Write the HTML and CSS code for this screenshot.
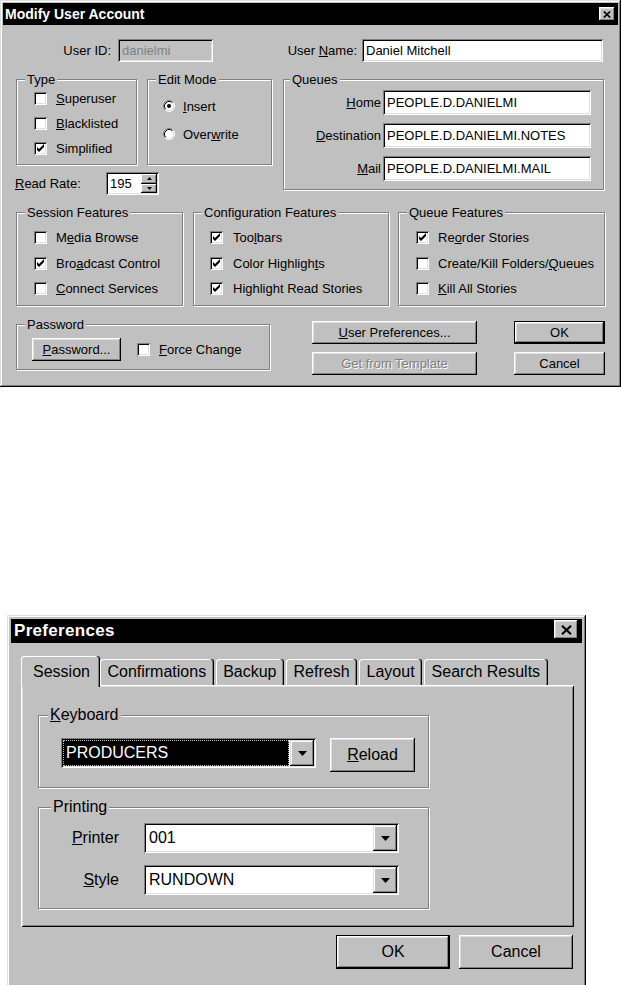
FILE: index.html
```html
<!DOCTYPE html>
<html lang="en">
<head>
    <meta charset="UTF-8">
    <title>Modify User Account</title>
    <link rel="stylesheet" href="styles.css">
</head>
<body>
    <!-- Modify User Account -->
    <div class="win acct">
        <div class="titlebar">
            <span class="title">Modify User Account</span>
            <span class="close-btn">
                <svg width="8" height="7" viewBox="0 0 8 7"><path d="M0.8 0.5L7.2 6.5M7.2 0.5L0.8 6.5" stroke="#000" stroke-width="1.7"/></svg>
            </span>
        </div>

        <div class="acct-body">
            <div class="row-ids">
                <span class="lbl lbl-userid">User ID:</span>
                <div class="field field-disabled w-userid">danielmi</div>
                <span class="lbl lbl-username">User <u>N</u>ame:</span>
                <div class="field w-username">Daniel Mitchell</div>
            </div>

            <div class="row-mid">
                <div class="col-left">
                    <div class="pair">
                        <div class="group g-type">
                            <span class="group-title">Type</span>
                            <div class="opt"><span class="check"></span><span><u>S</u>uperuser</span></div>
                            <div class="opt"><span class="check"></span><span><u>B</u>lacklisted</span></div>
                            <div class="opt"><span class="check checked"><svg width="9" height="9" viewBox="0 0 9 9"><path d="M1 3v3l2 2 5-5V0L3 5z" fill="#000"/></svg></span><span>Simplified</span></div>
                        </div>
                        <div class="group g-mode">
                            <span class="group-title">Edit Mode</span>
                            <div class="opt opt-radio">
                                <svg class="radio" width="12" height="12" viewBox="0 0 12 12">
                                    <circle cx="6" cy="6" r="5" fill="#fff"/>
                                    <path d="M2.11 9.89A5.5 5.5 0 0 1 9.89 2.11" fill="none" stroke="#808080"/>
                                    <path d="M9.89 2.11A5.5 5.5 0 0 1 2.11 9.89" fill="none" stroke="#fff"/>
                                    <path d="M2.82 9.18A4.5 4.5 0 0 1 9.18 2.82" fill="none" stroke="#000"/>
                                    <path d="M9.18 2.82A4.5 4.5 0 0 1 2.82 9.18" fill="none" stroke="#dfdfdf"/>
                                    <circle cx="6" cy="6" r="2" fill="#000"/>
                                </svg>
                                <span><u>I</u>nsert</span>
                            </div>
                            <div class="opt opt-radio">
                                <svg class="radio" width="12" height="12" viewBox="0 0 12 12">
                                    <circle cx="6" cy="6" r="5" fill="#fff"/>
                                    <path d="M2.11 9.89A5.5 5.5 0 0 1 9.89 2.11" fill="none" stroke="#808080"/>
                                    <path d="M9.89 2.11A5.5 5.5 0 0 1 2.11 9.89" fill="none" stroke="#fff"/>
                                    <path d="M2.82 9.18A4.5 4.5 0 0 1 9.18 2.82" fill="none" stroke="#000"/>
                                    <path d="M9.18 2.82A4.5 4.5 0 0 1 2.82 9.18" fill="none" stroke="#dfdfdf"/>
                                </svg>
                                <span>Over<u>w</u>rite</span>
                            </div>
                        </div>
                    </div>
                    <div class="readrate">
                        <span class="lbl-rate"><u>R</u>ead Rate:</span>
                        <div class="spin">
                            <span class="spin-val">195</span>
                            <span class="spin-btns">
                                <span class="spin-btn"><svg width="5" height="3" viewBox="0 0 5 3"><path d="M0 3h5L2.5 0z" fill="#000"/></svg></span>
                                <span class="spin-btn"><svg width="5" height="3" viewBox="0 0 5 3"><path d="M0 0h5L2.5 3z" fill="#000"/></svg></span>
                            </span>
                        </div>
                    </div>
                </div>

                <div class="group g-queues">
                    <span class="group-title">Queues</span>
                    <div class="q-row"><span><u>H</u>ome</span><div class="field w-queue">PEOPLE.D.DANIELMI</div></div>
                    <div class="q-row"><span><u>D</u>estination</span><div class="field w-queue">PEOPLE.D.DANIELMI.NOTES</div></div>
                    <div class="q-row"><span><u>M</u>ail</span><div class="field w-queue">PEOPLE.D.DANIELMI.MAIL</div></div>
                </div>
            </div>

            <div class="row-features">
                <div class="group g-feat g-session">
                    <span class="group-title">Session Features</span>
                    <div class="opt opt-feat"><span class="check"></span><span>M<u>e</u>dia Browse</span></div>
                    <div class="opt opt-feat"><span class="check checked"><svg width="9" height="9" viewBox="0 0 9 9"><path d="M1 3v3l2 2 5-5V0L3 5z" fill="#000"/></svg></span><span>Bro<u>a</u>dcast Control</span></div>
                    <div class="opt opt-feat"><span class="check"></span><span><u>C</u>onnect Services</span></div>
                </div>
                <div class="group g-feat g-config">
                    <span class="group-title">Configuration Features</span>
                    <div class="opt opt-feat"><span class="check checked"><svg width="9" height="9" viewBox="0 0 9 9"><path d="M1 3v3l2 2 5-5V0L3 5z" fill="#000"/></svg></span><span>Too<u>l</u>bars</span></div>
                    <div class="opt opt-feat"><span class="check checked"><svg width="9" height="9" viewBox="0 0 9 9"><path d="M1 3v3l2 2 5-5V0L3 5z" fill="#000"/></svg></span><span>Color Highligh<u>t</u>s</span></div>
                    <div class="opt opt-feat"><span class="check checked"><svg width="9" height="9" viewBox="0 0 9 9"><path d="M1 3v3l2 2 5-5V0L3 5z" fill="#000"/></svg></span><span>Highlight Read Stories</span></div>
                </div>
                <div class="group g-feat g-qfeat">
                    <span class="group-title">Queue Features</span>
                    <div class="opt opt-feat"><span class="check checked"><svg width="9" height="9" viewBox="0 0 9 9"><path d="M1 3v3l2 2 5-5V0L3 5z" fill="#000"/></svg></span><span>Re<u>o</u>rder Stories</span></div>
                    <div class="opt opt-feat"><span class="check"></span><span>Create/Kill Folders/<u>Q</u>ueues</span></div>
                    <div class="opt opt-feat"><span class="check"></span><span><u>K</u>ill All Stories</span></div>
                </div>
            </div>

            <div class="row-bottom">
                <div class="group g-pass">
                    <span class="group-title">Password</span>
                    <div class="pass-row">
                        <div class="btn btn-pass"><span><u>P</u>assword...</span></div>
                        <div class="opt opt-force"><span class="check"></span><span><u>F</u>orce Change</span></div>
                    </div>
                </div>
                <div class="btn-col btn-col-mid">
                    <div class="btn"><span><u>U</u>ser Preferences...</span></div>
                    <div class="btn btn-disabled"><span>Get from Template</span></div>
                </div>
                <div class="btn-col btn-col-ok">
                    <div class="btn btn-default"><span>OK</span></div>
                    <div class="btn"><span>Cancel</span></div>
                </div>
            </div>
        </div>
    </div>

    <!-- Preferences -->
    <div class="win prefs">
        <div class="titlebar">
            <span class="title">Preferences</span>
            <span class="close-btn">
                <svg width="11" height="10" viewBox="0 0 11 10"><path d="M1 0.8L10 9.2M10 0.8L1 9.2" stroke="#000" stroke-width="2.2"/></svg>
            </span>
        </div>

        <div class="prefs-body">
            <div class="tabs">
                <div class="tab tab-active">Session</div>
                <div class="tab">Confirmations</div>
                <div class="tab">Backup</div>
                <div class="tab">Refresh</div>
                <div class="tab">Layout</div>
                <div class="tab">Search Results</div>
            </div>

            <div class="panel">
                <div class="group g-keyboard">
                    <span class="group-title"><u>K</u>eyboard</span>
                    <div class="kb-row">
                        <div class="combo w-kb">
                            <span class="combo-text combo-selected">PRODUCERS</span>
                            <span class="combo-btn"><svg width="9" height="5" viewBox="0 0 9 5"><path d="M0 0h9L4.5 5z" fill="#000"/></svg></span>
                        </div>
                        <div class="btn btn-reload"><span><u>R</u>eload</span></div>
                    </div>
                </div>

                <div class="group g-printing">
                    <span class="group-title">Printing</span>
                    <div class="p-row">
                        <span class="p-lbl"><u>P</u>rinter</span>
                        <div class="combo w-print">
                            <span class="combo-text">001</span>
                            <span class="combo-btn"><svg width="9" height="5" viewBox="0 0 9 5"><path d="M0 0h9L4.5 5z" fill="#000"/></svg></span>
                        </div>
                    </div>
                    <div class="p-row">
                        <span class="p-lbl"><u>S</u>tyle</span>
                        <div class="combo w-print">
                            <span class="combo-text">RUNDOWN</span>
                            <span class="combo-btn"><svg width="9" height="5" viewBox="0 0 9 5"><path d="M0 0h9L4.5 5z" fill="#000"/></svg></span>
                        </div>
                    </div>
                </div>
            </div>

            <div class="dlg-buttons">
                <div class="btn btn-default btn-big"><span>OK</span></div>
                <div class="btn btn-big"><span>Cancel</span></div>
            </div>
        </div>
    </div>
</body>
</html>
```

FILE: styles.css
```css
* {
    margin: 0;
    padding: 0;
    box-sizing: border-box;
}
body {
    background: #fff;
    font: 13px/15px "Liberation Sans", Arial, sans-serif;
    color: #000;
}
u {
    text-underline-offset: 1px;
}

/* 3D window frame */
.win {
    background: #c0c0c0;
    padding: 3px;
    box-shadow: inset -1px -1px #000, inset 1px 1px #dfdfdf, inset -2px -2px #808080, inset 2px 2px #fff;
}
.titlebar {
    display: flex;
    align-items: center;
    justify-content: space-between;
    background: #000;
    color: #fff;
    height: 22px;
    padding: 0 3px 0 2px;
}
.title {
    font-weight: bold;
    font-size: 14px;
}
.close-btn {
    width: 16px;
    height: 14px;
    display: flex;
    align-items: center;
    justify-content: center;
    background: #c0c0c0;
    box-shadow: inset -1px -1px #000, inset 1px 1px #fff, inset -2px -2px #808080, inset 2px 2px #dfdfdf;
}

/* common controls */
.field {
    height: 23px;
    display: flex;
    align-items: center;
    padding: 0 4px;
    background: #fff;
    white-space: nowrap;
    overflow: hidden;
    box-shadow: inset 1px 1px #808080, inset -1px -1px #fff, inset 2px 2px #000, inset -2px -2px #dfdfdf;
}
.field-disabled {
    background: #c0c0c0;
    color: #808080;
}
.btn {
    height: 23px;
    display: flex;
    align-items: center;
    justify-content: center;
    background: #c0c0c0;
    white-space: nowrap;
    box-shadow: inset -1px -1px #000, inset 1px 1px #fff, inset -2px -2px #808080, inset 2px 2px #dfdfdf;
}
.btn-default {
    box-shadow: inset 0 0 0 1px #000, inset -2px -2px #000, inset 2px 2px #fff, inset -3px -3px #808080, inset 3px 3px #dfdfdf;
}
.btn-disabled {
    color: #808080;
    text-shadow: 1px 1px #fff;
}

/* group box: --pl is the content indent, the title keeps its own place */
.group {
    --pl: 0px;
    --gap: 0px;
    padding-left: var(--pl);
    border: 1px solid #808080;
    box-shadow: inset 1px 1px #fff, 1px 1px #fff;
}
.group-title {
    display: block;
    width: fit-content;
    margin: -8px 0 calc(var(--gap) - 1px) calc(8px - var(--pl));
    padding: 0 2px;
    line-height: 15px;
    background: #c0c0c0;
}
.opt {
    display: flex;
    align-items: center;
    height: 25px;
    white-space: nowrap;
}
.check {
    width: 13px;
    height: 13px;
    flex: none;
    margin-right: 9px;
    padding: 2px;
    background: #fff;
    box-shadow: inset 1px 1px #808080, inset -1px -1px #fff, inset 2px 2px #000, inset -2px -2px #dfdfdf;
}
.check svg {
    display: block;
}
.radio {
    flex: none;
    margin-right: 8px;
}

/* Modify User Account */
.acct {
    width: 621px;
    height: 387px;
}
.acct-body {
    padding: 14px 13px 0;
}
.row-ids {
    display: flex;
    align-items: center;
    height: 23px;
}
.lbl {
    text-align: right;
    white-space: nowrap;
}
.lbl-userid {
    width: 95px;
    margin-right: 7px;
}
.w-userid {
    width: 95px;
}
.lbl-username {
    width: 144px;
    margin-right: 5px;
}
.w-username {
    width: 241px;
}

.row-mid {
    display: flex;
    gap: 11px;
    margin-top: 17px;
}
.col-left {
    width: 256px;
}
.pair {
    display: flex;
    gap: 10px;
}
.g-type {
    --pl: 17px;
    width: 121px;
    height: 86px;
}
.g-mode {
    --pl: 15px;
    --gap: 6px;
    width: 125px;
    height: 86px;
}
.opt-radio {
    height: 28px;
}
.readrate {
    display: flex;
    align-items: center;
    margin-top: 7px;
}
.lbl-rate {
    width: 90px;
    margin-left: -1px;
    margin-right: 1px;
}
.spin {
    width: 53px;
    height: 23px;
    display: flex;
    padding: 2px;
    background: #fff;
    box-shadow: inset 1px 1px #808080, inset -1px -1px #fff, inset 2px 2px #000, inset -2px -2px #dfdfdf;
}
.spin-val {
    flex: 1;
    display: flex;
    align-items: center;
    padding-left: 2px;
}
.spin-btns {
    width: 16px;
    display: flex;
    flex-direction: column;
}
.spin-btn {
    flex: 1;
    display: flex;
    align-items: center;
    justify-content: center;
    background: #c0c0c0;
    box-shadow: inset -1px -1px #000, inset 1px 1px #fff, inset -2px -2px #808080;
}
.spin-btn svg {
    display: block;
}

.g-queues {
    --gap: 4px;
    width: 321px;
    height: 111px;
    padding-right: 12px;
}
.g-queues .group-title {
    margin-left: 6px;
}
.q-row {
    display: flex;
    justify-content: flex-end;
    align-items: center;
    height: 25px;
    margin-bottom: 8px;
}
.q-row span {
    margin-right: 2px;
}
.w-queue {
    width: 208px;
    height: 25px;
}

.row-features {
    display: flex;
    margin-top: 17px;
}
.g-feat {
    --pl: 17px;
    --gap: 6px;
    height: 94px;
}
.opt-feat {
    height: 25.5px;
}
.g-session {
    width: 167px;
    margin-right: 10px;
}
.g-config {
    --pl: 16px;
    width: 196px;
    margin-right: 9px;
}
.g-config .check {
    margin-right: 10px;
}
.g-qfeat {
    width: 207px;
}

.row-bottom {
    display: flex;
    align-items: flex-start;
    margin-top: 15px;
}
.g-pass {
    --pl: 15px;
    --gap: 6px;
    width: 254px;
    height: 46px;
    margin-top: 3px;
}
.pass-row {
    display: flex;
    align-items: center;
}
.btn-pass {
    width: 89px;
}
.opt-force {
    margin-left: 16px;
}
.btn-col {
    display: flex;
    flex-direction: column;
    gap: 8px;
}
.btn-col-mid {
    width: 165px;
    margin-left: 42px;
}
.btn-col-ok {
    width: 91px;
    margin-left: 37px;
}

/* Preferences */
.prefs {
    width: 579px;
    height: 372px;
    margin: 228px 0 0 7px;
    padding: 4px;
    font-size: 16px;
    line-height: 18px;
}
.prefs .titlebar {
    height: 24px;
    padding: 0 4px 0 3px;
}
.prefs .title {
    font-size: 17px;
    letter-spacing: 0.3px;
}
.prefs .close-btn {
    width: 24px;
    height: 19px;
    margin-top: -3px;
}
.prefs-body {
    padding: 13px 8px 0 10px;
}
.tabs {
    display: flex;
    align-items: flex-end;
    height: 29px;
}
.tab {
    height: 26px;
    display: flex;
    align-items: center;
    padding: 0 7.5px;
    margin-right: 2px;
    background: #c0c0c0;
    border-radius: 3px 3px 0 0;
    white-space: nowrap;
    box-shadow: inset -1px 0 #000, inset -2px 0 #808080, inset 1px 1px #fff;
}
.tab-active {
    position: relative;
    z-index: 1;
    height: 31px;
    margin: 0 0 -2px 0;
    padding: 0 10px 0 12px;
}
.panel {
    width: 553px;
    height: 242px;
    padding: 30px 0 0 17px;
    box-shadow: inset 1px 1px #fff, inset -1px -1px #000, inset 2px 2px #dfdfdf, inset -2px -2px #808080;
}
.prefs .group-title {
    line-height: 18px;
    margin-top: -10px;
    margin-left: calc(9px - var(--pl));
}
.g-keyboard {
    --pl: 22px;
    width: 391px;
    height: 73px;
}
.kb-row {
    display: flex;
    align-items: flex-start;
    margin-top: 15px;
}
.combo {
    display: flex;
    height: 30px;
    padding: 2px;
    background: #fff;
    box-shadow: inset 1px 1px #808080, inset -1px -1px #fff, inset 2px 2px #000, inset -2px -2px #dfdfdf;
}
.combo-text {
    flex: 1;
    display: flex;
    align-items: center;
    padding-left: 3px;
    white-space: nowrap;
}
.combo-selected {
    background: #000;
    color: #fff;
    outline: 1px dotted #c0c0c0;
    outline-offset: -1px;
    margin-right: 1px;
}
.combo-btn {
    width: 24px;
    display: flex;
    align-items: center;
    justify-content: center;
    background: #c0c0c0;
    box-shadow: inset -1px -1px #000, inset 1px 1px #dfdfdf, inset -2px -2px #808080, inset 2px 2px #fff;
}
.w-kb {
    width: 255px;
}
.btn-reload {
    width: 85px;
    height: 34px;
    margin-left: 14px;
}
.g-printing {
    width: 391px;
    height: 102px;
    margin-top: 19px;
}
.g-printing .group-title {
    margin-left: 12px;
}
.p-row {
    display: flex;
    align-items: center;
    margin-top: 8px;
}
.p-row + .p-row {
    margin-top: 12px;
}
.p-lbl {
    width: 80px;
    margin-right: 25px;
    text-align: right;
}
.w-print {
    width: 255px;
}
.dlg-buttons {
    display: flex;
    justify-content: flex-end;
    gap: 9px;
    margin: 8px 1px 0 0;
}
.btn-big {
    width: 114px;
    height: 34px;
}
```
